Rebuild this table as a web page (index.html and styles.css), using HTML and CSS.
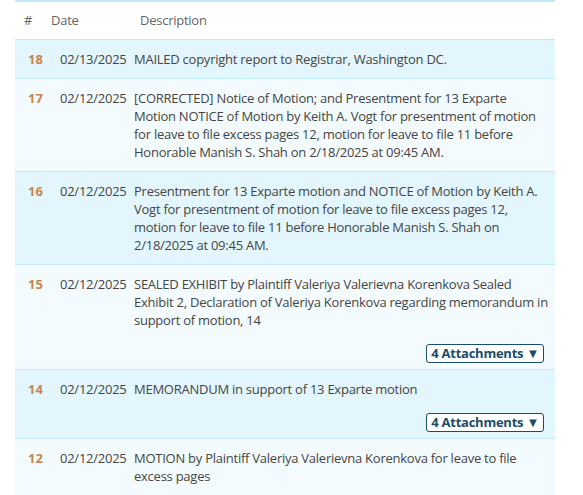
FILE: index.html
```html
<!DOCTYPE html>
<html>
<head>
<meta charset="utf-8">
<link rel="stylesheet" href="styles.css">
</head>
<body>
<div class="docket">
  <div class="head">
    <div class="h-num">#</div>
    <div class="h-date">Date</div>
    <div class="h-desc">Description</div>
  </div>
  <div class="row odd">
    <div class="num">18</div>
    <div class="date">02/13/2025</div>
    <div class="desc"><div class="text">MAILED copyright report to Registrar, Washington DC.</div></div>
  </div>
  <div class="row even">
    <div class="num">17</div>
    <div class="date">02/12/2025</div>
    <div class="desc"><div class="text">[CORRECTED] Notice of Motion; and Presentment for 13 Exparte Motion NOTICE of Motion by Keith A. Vogt for presentment of motion for leave to file excess pages 12, motion for leave to file 11 before Honorable Manish S. Shah on 2/18/2025 at 09:45 AM.</div></div>
  </div>
  <div class="row odd">
    <div class="num">16</div>
    <div class="date">02/12/2025</div>
    <div class="desc"><div class="text">Presentment for 13 Exparte motion and NOTICE of Motion by Keith A. Vogt for presentment of motion for leave to file excess pages 12, motion for leave to file 11 before Honorable Manish S. Shah on 2/18/2025 at 09:45 AM.</div></div>
  </div>
  <div class="row even has-att">
    <div class="num">15</div>
    <div class="date">02/12/2025</div>
    <div class="desc">
      <div class="text">SEALED EXHIBIT by Plaintiff Valeriya Valerievna Korenkova Sealed Exhibit 2, Declaration of Valeriya Korenkova regarding memorandum in support of motion, 14</div>
      <div class="att-wrap"><button class="att">4 Attachments ▼</button></div>
    </div>
  </div>
  <div class="row odd has-att">
    <div class="num">14</div>
    <div class="date">02/12/2025</div>
    <div class="desc">
      <div class="text">MEMORANDUM in support of 13 Exparte motion</div>
      <div class="att-wrap"><button class="att">4 Attachments ▼</button></div>
    </div>
  </div>
  <div class="row even">
    <div class="num">12</div>
    <div class="date">02/12/2025</div>
    <div class="desc"><div class="text">MOTION by Plaintiff Valeriya Valerievna Korenkova for leave to file excess pages</div></div>
  </div>
</div>
</body>
</html>
```

FILE: styles.css
```css
html, body {
  margin: 0;
  padding: 0;
  background: #ffffff;
}
body {
  font-family: "Open Sans", "Noto Sans", sans-serif;
  font-size: 13px;
  line-height: 18px;
  letter-spacing: -0.25px;
  color: #454545;
}
.docket {
  margin-left: 15px;
  width: 540px;
  border-top: 2px solid #c2e9f9;
}
.head {
  display: flex;
  height: 36px;
  padding-bottom: 1px;
  align-items: center;
  color: #666666;
  border-bottom: 1px solid #c2e9f9;
}
.h-num { width: 36px; padding-left: 9px; box-sizing: border-box; }
.h-date { width: 89px; }
.h-desc { flex: 1; }
.row {
  display: flex;
  border-bottom: 1px solid #c2e9f9;
  padding: 10px 7px 10px 0;
}
.row.odd { background: #e3f6fd; }
.row.even { background: #f3fbfe; }
.row.has-att { padding-bottom: 6px; }
.num {
  width: 45px;
  padding-left: 13px;
  box-sizing: border-box;
  font-weight: 700;
  letter-spacing: 0;
  color: #c8854a;
}
.date {
  width: 74px;
  flex: none;
}
.desc {
  flex: 1;
  display: flex;
  flex-direction: column;
}
.att-wrap {
  display: flex;
  justify-content: flex-end;
  margin-top: 15px;
  margin-right: 4px;
}
.att {
  font-family: inherit;
  font-size: 13px;
  font-weight: 700;
  letter-spacing: -0.25px;
  line-height: 17px;
  color: #1b4d68;
  background: #ffffff;
  border: 1px solid #1b4d68;
  border-radius: 3px;
  padding: 0 4px;
  height: 19px;
}
```
